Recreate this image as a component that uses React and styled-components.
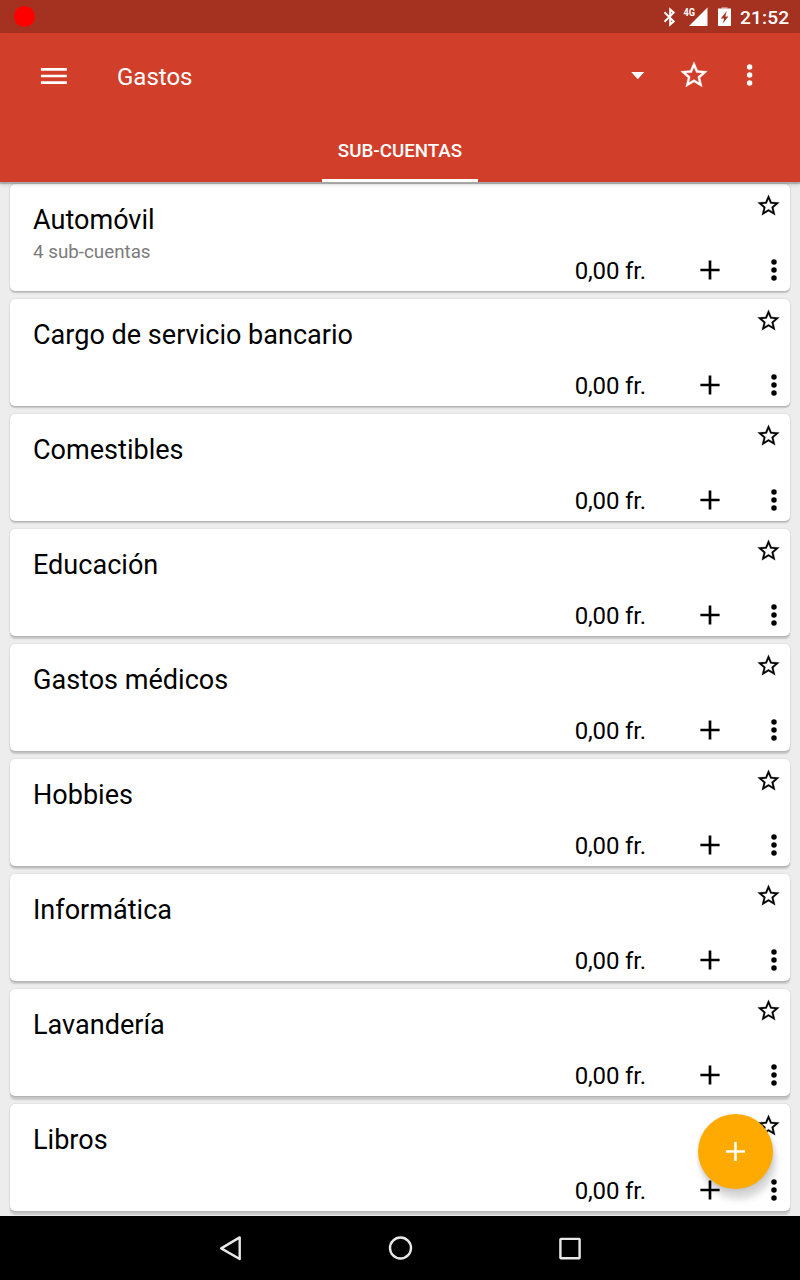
import React from "react";
import styled, { createGlobalStyle } from "styled-components";

const Global = createGlobalStyle`
  * { box-sizing: border-box; }
  body { margin: 0; background: #ededed; font-family: Roboto, "Noto Sans", sans-serif; }
  svg { display: block; flex: none; }
`;

const Screen = styled.div`
  position: relative;
  width: 800px;
  height: 1280px;
  display: flex;
  flex-direction: column;
  overflow: hidden;
  background: #ededed;
`;

const StatusBar = styled.div`
  flex: none;
  height: 33px;
  display: flex;
  align-items: center;
  justify-content: space-between;
  padding: 0 10px 0 13.5px;
  background: #a53121;
  color: #fff;
`;

const RecordDot = styled.span`
  width: 21px;
  height: 21px;
  border-radius: 50%;
  background: #f00;
`;

const StatusIcons = styled.div`
  display: flex;
  align-items: center;
  height: 33px;
`;

const Clock = styled.span`
  width: 50px;
  margin-left: 9px;
  padding-top: 2px;
  font-size: 19.2px;
  line-height: 24px;
  font-weight: 500;
  letter-spacing: 0.1px;
  white-space: nowrap;
`;

const Header = styled.header`
  flex: none;
  position: relative;
  z-index: 1;
  height: 149px;
  display: flex;
  flex-direction: column;
  background: #d13f2b;
  color: #fff;
  box-shadow: 0 2px 1px rgba(0, 0, 0, 0.2), 0 3px 4px rgba(0, 0, 0, 0.12);
`;

const Toolbar = styled.div`
  height: 85px;
  display: flex;
  align-items: center;
  padding: 0 34.5px 0 38px;
`;

const Title = styled.h1`
  flex: 1;
  margin: 2px 0 0 47px;
  font-size: 24px;
  line-height: 32px;
  font-weight: 400;
`;

const ToolbarActions = styled.div`
  display: flex;
  align-items: center;
  gap: 24px;
  padding-bottom: 1px;
`;

const Tabs = styled.nav`
  height: 64px;
  display: flex;
  justify-content: center;
`;

const Tab = styled.div`
  width: 156px;
  height: 64px;
  padding-top: 21px;
  border-bottom: 3px solid #fff;
  text-align: center;
  font-size: 18.75px;
  line-height: 24px;
  font-weight: 500;
`;

const List = styled.main`
  flex: 1;
  min-height: 0;
  display: flex;
  flex-direction: column;
  gap: 8px;
  padding: 2px 10px 0;
  overflow: hidden;
`;

const Card = styled.article`
  flex: none;
  height: 107px;
  display: flex;
  justify-content: space-between;
  border-radius: 5px;
  background: #fff;
  color: #000;
  box-shadow: 0 ${(p) => p.$drop}px 1.5px rgba(0, 0, 0, 0.15), 0 0.5px 2px rgba(0, 0, 0, 0.14);
`;

const AccountText = styled.div`
  padding: 19px 0 0 23px;
`;

const AccountName = styled.h2`
  margin: 0;
  font-size: 27.05px;
  line-height: 34px;
  font-weight: 400;
`;

const AccountNote = styled.p`
  margin: 3px 0 0;
  font-size: 18.8px;
  line-height: 24px;
  color: #7b7b7b;
`;

const CardSide = styled.div`
  width: 216px;
  display: flex;
  flex-direction: column;
  align-items: flex-end;
  justify-content: space-between;
  padding: 8px 0 5px;
`;

const Favorite = styled.div`
  padding-right: 8px;
`;

const BalanceRow = styled.div`
  display: flex;
  align-items: center;
  height: 32px;
`;

const Balance = styled.span`
  margin-right: 48px;
  padding-top: 2px;
  font-size: 24px;
  line-height: 32px;
  letter-spacing: -0.15px;
  white-space: nowrap;
`;

const MenuSlot = styled.div`
  margin-left: 32px;
`;

const Fab = styled.button`
  position: absolute;
  z-index: 2;
  left: 698px;
  top: 1114px;
  width: 75px;
  height: 75px;
  display: flex;
  align-items: center;
  justify-content: center;
  padding: 0;
  border: 0;
  border-radius: 50%;
  background: #ffaa00;
  color: #fff;
  box-shadow: 3px 10px 7px rgba(0, 0, 0, 0.16), 0 1px 4px rgba(0, 0, 0, 0.12);
`;

const NavBar = styled.footer`
  flex: none;
  position: relative;
  z-index: 1;
  height: 64px;
  display: flex;
  align-items: center;
  justify-content: center;
  gap: 138px;
  background: #000;
`;

const MenuIcon = () => (
  <svg width="32" height="32" viewBox="0 0 24 24" fill="currentColor">
    <path d="M2.2 18h19.4v-2H2.2V18zm0-5h19.4v-2H2.2V13zm0-7v2h19.4V6H2.2z" />
  </svg>
);

const StarIcon = ({ size = 32, viewBox = "0 0 24 24" }) => (
  <svg width={size} height={size} viewBox={viewBox} fill="currentColor" stroke="currentColor" strokeWidth="0.2">
    <path d="M22 9.24l-7.19-.62L12 2 9.19 8.63 2 9.24l5.46 4.73L5.82 21 12 17.27 18.18 21l-1.63-7.03L22 9.24zM12 15.4l-3.76 2.27 1-4.28-3.32-2.88 4.38-.38L12 6.1l1.71 4.04 4.38.38-3.32 2.88 1 4.28L12 15.4z" />
  </svg>
);

const DotsIcon = ({ cx = 12 }) => (
  <svg width="32" height="32" viewBox="0 0 24 24" fill="currentColor">
    <circle cx={cx} cy="6" r="2.05" />
    <circle cx={cx} cy="12" r="2.05" />
    <circle cx={cx} cy="18" r="2.05" />
  </svg>
);

const PlusIcon = () => (
  <svg width="32" height="32" viewBox="0 0 24 24" stroke="currentColor" strokeWidth="2">
    <path d="M4.8 12h14.4M12 4.8v14.4" />
  </svg>
);

const FabPlusIcon = () => (
  <svg width="33" height="33" viewBox="0 0 33 33" stroke="currentColor" strokeWidth="2.6">
    <path d="M7 16.5h19M16.5 7v19" />
  </svg>
);

const CaretIcon = () => (
  <svg width="32" height="32" viewBox="0 0 24 24" fill="currentColor">
    <path d="M6.9 9.7l4.9 5.4 4.9-5.4z" />
  </svg>
);

const BluetoothIcon = () => (
  <svg width="14" height="20" viewBox="0 0 14 20" fill="none" stroke="#fff" strokeWidth="2">
    <path d="M1.5 5.2l9.2 9.2L7.2 17.6V2.4l3.5 3.2L1.5 14.8" />
  </svg>
);

const SignalIcon = () => (
  <svg width="26" height="22" viewBox="0 0 26 22">
    <path d="M24.5 1.5v18.5H6z" fill="#fff" />
    <text x="0.5" y="9.6" fill="#fff" fontFamily="Roboto, sans-serif" fontSize="11" fontWeight="700" textLength="11.5" lengthAdjust="spacingAndGlyphs">4G</text>
  </svg>
);

const BatteryIcon = () => (
  <svg width="13" height="20" viewBox="0 0 13 20">
    <path d="M3.5 0h6v2h-6z" fill="#c98379" />
    <path d="M0 1.5h13v17.5H0z" fill="#fff" />
    <path d="M8.8 4L2.8 11.4h3.4L4.6 16.6l5.8-7.2H7.2z" fill="#a53121" />
  </svg>
);

const StatusGap = styled.span`
  width: ${(p) => p.$w}px;
`;

const BackIcon = () => (
  <svg width="32" height="32" viewBox="0 0 32 32" fill="none" stroke="#e8e8e8" strokeWidth="2.4" strokeLinejoin="round">
    <path d="M25.7 5.4v21.6L7.2 16.4z" />
  </svg>
);

const HomeIcon = () => (
  <svg width="32" height="32" viewBox="0 0 32 32" fill="none" stroke="#e8e8e8" strokeWidth="2.4">
    <circle cx="16.5" cy="16" r="10.5" />
  </svg>
);

const RecentsIcon = () => (
  <svg width="32" height="32" viewBox="0 0 32 32" fill="none" stroke="#e8e8e8" strokeWidth="2.4" strokeLinejoin="round">
    <rect x="6.4" y="6.9" width="19.2" height="19.4" rx="0.6" />
  </svg>
);

const accounts = [
  { name: "Automóvil", note: "4 sub-cuentas" },
  { name: "Cargo de servicio bancario" },
  { name: "Comestibles" },
  { name: "Educación" },
  { name: "Gastos médicos" },
  { name: "Hobbies" },
  { name: "Informática" },
  { name: "Lavandería" },
  { name: "Libros" },
];

const AccountCard = ({ name, note, drop }) => (
  <Card $drop={drop}>
    <AccountText>
      <AccountName>{name}</AccountName>
      {note && <AccountNote>{note}</AccountNote>}
    </AccountText>
    <CardSide>
      <Favorite>
        <StarIcon size={26} viewBox="0.45 -0.5 24 24" />
      </Favorite>
      <BalanceRow>
        <Balance>0,00 fr.</Balance>
        <PlusIcon />
        <MenuSlot>
          <DotsIcon />
        </MenuSlot>
      </BalanceRow>
    </CardSide>
  </Card>
);

export default function App() {
  return (
    <>
      <Global />
      <Screen>
        <StatusBar>
          <RecordDot />
          <StatusIcons>
            <BluetoothIcon />
            <StatusGap $w={6} />
            <SignalIcon />
            <StatusGap $w={9} />
            <BatteryIcon />
            <Clock>21:52</Clock>
          </StatusIcons>
        </StatusBar>
        <Header>
          <Toolbar>
            <MenuIcon />
            <Title>Gastos</Title>
            <ToolbarActions>
              <CaretIcon />
              <StarIcon />
              <DotsIcon cx={11.7} />
            </ToolbarActions>
          </Toolbar>
          <Tabs>
            <Tab>SUB-CUENTAS</Tab>
          </Tabs>
        </Header>
        <List>
          {accounts.map((a, i) => (
            <AccountCard key={a.name} name={a.name} note={a.note} drop={1.2 + i * 0.28} />
          ))}
        </List>
        <NavBar>
          <BackIcon />
          <HomeIcon />
          <RecentsIcon />
        </NavBar>
        <Fab aria-label="+">
          <FabPlusIcon />
        </Fab>
      </Screen>
    </>
  );
}
